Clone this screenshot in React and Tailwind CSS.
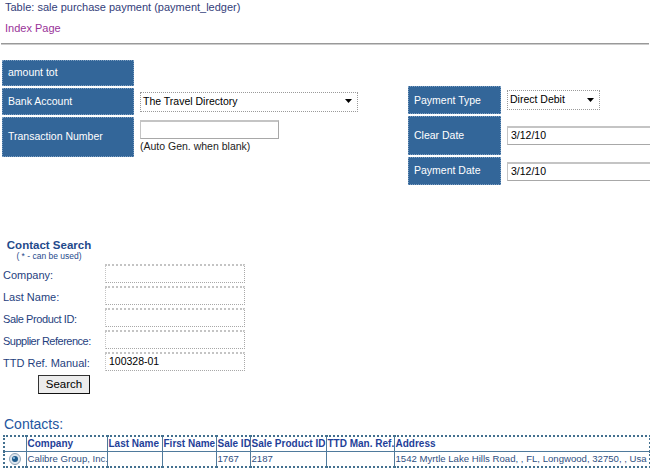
import React from 'react';

const font = { fontFamily: '"Liberation Sans", Arial, sans-serif' };

function Caret() {
  return (
    <svg width="8" height="5" viewBox="0 0 8 5" className="shrink-0">
      <path d="M0 0h7L3.5 4z" fill="#000" />
    </svg>
  );
}

function FakeSelect({ value, className }) {
  return (
    <div
      className={`flex items-center justify-between border border-dotted border-[#9a9a9a] bg-white pl-[2px] pr-[4px] text-[10.5px] text-black ${className}`}
    >
      <span>{value}</span>
      <Caret />
    </div>
  );
}

function Field({ value, className }) {
  return (
    <div
      className={`flex items-center border border-[#a8a8a8] border-t-2 border-t-[#c4c4c4] border-l-[#c4c4c4] bg-white pl-[3px] text-[10.5px] text-black ${className}`}
    >
      {value}
    </div>
  );
}

function Label({ children, className }) {
  return (
    <div
      className={`flex items-center border border-dotted border-[#7d9fc2] bg-[#336699] pl-[5px] text-[10.5px] text-white ${className}`}
    >
      {children}
    </div>
  );
}

const searchRows = [
  ['Company:', '', ''],
  ['Last Name:', '', ''],
  ['Sale Product ID:', '', 'tracking-[-0.4px]'],
  ['Supplier Reference:', '', 'tracking-[-0.5px]'],
  ['TTD Ref. Manual:', '100328-01', ''],
];

const cols = [
  ['', 22],
  ['Company', 81],
  ['Last Name', 55],
  ['First Name', 54],
  ['Sale ID', 34],
  ['Sale Product ID', 76],
  ['TTD Man. Ref.', 68],
  ['Address', 256],
];

export default function App() {
  return (
    <div style={font} className="w-[650px] h-[472px] overflow-hidden bg-white">
      <div className="pl-[5px] pt-[1px] text-[11px] leading-[12px] text-[#33407a]">
        Table: sale purchase payment (payment_ledger)
      </div>
      <div className="pl-[5px] mt-[9px] text-[11px] leading-[12px] text-[#993399]">Index Page</div>

      <div className="mt-[9px] mx-[1px] border-t border-[#999] border-b border-b-dotted border-b-[#ccc] h-[2px]" />

      {/* payment form */}
      <div className="flex mt-[15px]">
        <div className="ml-[2px] flex flex-col gap-[2px]">
          <Label className="w-[132px] h-[26px]">amount tot</Label>
          <div className="flex items-center">
            <Label className="w-[132px] h-[27px]">Bank Account</Label>
            <FakeSelect value="The Travel Directory" className="ml-[6px] w-[218px] h-[20px]" />
          </div>
          <div className="flex items-start">
            <Label className="w-[132px] h-[40px]">Transaction Number</Label>
            <div className="ml-[6px] mt-[3px]">
              <Field className="w-[139px] h-[19px]" value="" />
              <div className="text-[10.5px] leading-[13px] text-[#222] mt-[1px]">(Auto Gen. when blank)</div>
            </div>
          </div>
        </div>

        <div className="ml-[50px] mt-[26px] flex flex-col gap-[2px]">
          <div className="flex items-center">
            <Label className="w-[93px] h-[28px] pt-[2px]">Payment Type</Label>
            <FakeSelect value="Direct Debit" className="ml-[6px] w-[93px] h-[20px]" />
          </div>
          <div className="flex items-center">
            <Label className="w-[93px] h-[39px]">Clear Date</Label>
            <Field className="ml-[6px] w-[160px] h-[19px]" value="3/12/10" />
          </div>
          <div className="flex items-center">
            <Label className="w-[93px] h-[28px]">Payment Date</Label>
            <Field className="ml-[6px] w-[160px] h-[19px]" value="3/12/10" />
          </div>
        </div>
      </div>

      {/* contact search */}
      <div className="mt-[54px] pl-[3px]">
        <div className="w-[92px] text-center">
          <div className="text-[11.5px] leading-[13px] font-bold text-[#1f4a8c]">Contact Search</div>
          <div className="text-[8.5px] leading-[9px] text-[#1f4a8c]">( * - can be used)</div>
        </div>
        <div className="mt-[3px] flex flex-col gap-[3px]">
          {searchRows.map(([label, value, extra]) => (
            <div key={label} className="flex items-center h-[19px]">
              <div className={`w-[102px] pt-[3px] text-[11px] leading-[13px] text-[#1f3f80] whitespace-nowrap ${extra}`}>
                {label}
              </div>
              <Field className="w-[140px] h-[19px] border-dotted" value={value} />
            </div>
          ))}
        </div>
        <div className="mt-[4px] ml-[35px] w-[52px] h-[19px] flex items-center justify-center border border-[#333] border-r-[#111] border-b-[#111] bg-[#ececec] text-[11.5px] text-black">
          Search
        </div>
      </div>

      {/* contacts */}
      <div className="mt-[22px] pl-[4px] text-[14px] leading-[16px] text-[#2456a0]">Contacts:</div>
      <table className="ml-[3px] mt-[3px] table-fixed border-collapse border-2 border-dotted border-[#43708f] text-[10px]" style={{ width: 646 }}>
        <colgroup>
          {cols.map(([c, w], i) => (
            <col key={i} style={{ width: w }} />
          ))}
        </colgroup>
        <thead>
          <tr className="h-[15px]">
            {cols.map(([c], i) => (
              <th
                key={i}
                className="border border-[#4f7a9c] px-[1px] text-left font-bold text-[#1f3f99] whitespace-nowrap overflow-hidden leading-[13px]"
              >
                {c}
              </th>
            ))}
          </tr>
        </thead>
        <tbody>
          <tr className="h-[16px] text-[#2f4f7f] text-[9.6px]">
            <td className="border border-[#4f7a9c] text-center">
              <svg width="12" height="12" viewBox="0 0 12 12" className="inline-block align-middle">
                <circle cx="6" cy="6" r="5.5" fill="#dde6ee" stroke="#8fa4b8" />
                <circle cx="6" cy="6" r="3" fill="#1d5b8c" />
                <circle cx="5" cy="5" r="1" fill="#9cc8ea" />
              </svg>
            </td>
            <td className="border border-[#4f7a9c] px-[1px] whitespace-nowrap overflow-hidden">Calibre Group, Inc.</td>
            <td className="border border-[#4f7a9c]"></td>
            <td className="border border-[#4f7a9c]"></td>
            <td className="border border-[#4f7a9c] px-[1px]">1767</td>
            <td className="border border-[#4f7a9c] px-[1px]">2187</td>
            <td className="border border-[#4f7a9c]"></td>
            <td className="border border-[#4f7a9c] px-[1px] whitespace-nowrap overflow-hidden">
              1542 Myrtle Lake Hills Road, , FL, Longwood, 32750, , Usa
            </td>
          </tr>
        </tbody>
      </table>
    </div>
  );
}
